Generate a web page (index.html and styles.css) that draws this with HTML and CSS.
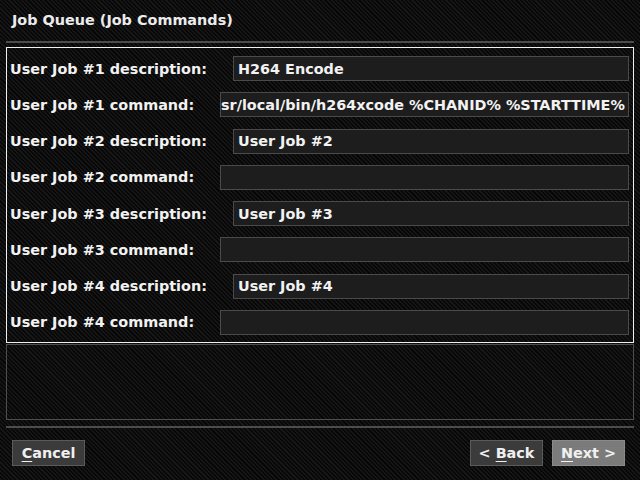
FILE: index.html
```html
<!DOCTYPE html>
<html>
<head>
<meta charset="utf-8">
<link rel="stylesheet" href="styles.css">
</head>
<body>
<div class="screen">
  <div class="title">Job Queue (Job Commands)</div>
  <div class="sep"></div>
  <div class="form">
    <div class="label">User Job #1 description:</div>
    <div class="field desc"><span>H264 Encode</span></div>
    <div class="label">User Job #1 command:</div>
    <div class="field cmd"><span>sr/local/bin/h264xcode %CHANID% %STARTTIME%</span></div>
    <div class="label">User Job #2 description:</div>
    <div class="field desc"><span>User Job #2</span></div>
    <div class="label">User Job #2 command:</div>
    <div class="field cmd"><span></span></div>
    <div class="label">User Job #3 description:</div>
    <div class="field desc"><span>User Job #3</span></div>
    <div class="label">User Job #3 command:</div>
    <div class="field cmd"><span></span></div>
    <div class="label">User Job #4 description:</div>
    <div class="field desc"><span>User Job #4</span></div>
    <div class="label">User Job #4 command:</div>
    <div class="field cmd"><span></span></div>
  </div>
  <div class="help"></div>
  <div class="sep sep2"></div>
  <div class="buttons">
    <div class="btn"><span><u>C</u>ancel</span></div>
    <div class="spacer"></div>
    <div class="btn"><span>&lt; <u>B</u>ack</span></div>
    <div class="btn active"><span><u>N</u>ext &gt;</span></div>
  </div>
</div>
</body>
</html>
```

FILE: styles.css
```css
html, body {
  margin: 0;
  padding: 0;
  width: 640px;
  height: 480px;
  overflow: hidden;
  background: #0c0c0c;
}
.screen {
  width: 640px;
  height: 480px;
  box-sizing: border-box;
  padding: 0 6px;
  display: flex;
  flex-direction: column;
  font-family: "DejaVu Sans", sans-serif;
  font-weight: bold;
  font-size: 14.4px;
  color: #f2f2f2;
  background: repeating-linear-gradient(45deg, #161616 0px, #161616 1.5px, #070707 1.5px, #070707 3px);
}
.title {
  height: 41px;
  line-height: 40px;
  padding-left: 6px;
  color: #ececec;
}
.sep {
  height: 2px;
  background: #4c4c4c;
  flex: none;
}
.form {
  margin-top: 4px;
  height: 296px;
  box-sizing: border-box;
  border: 1px solid #f0f0f0;
  padding: 8px 4px 0 3px;
  display: grid;
  grid-template-columns: 210px 1fr;
  grid-auto-rows: 25px;
  row-gap: 11.25px;
  flex: none;
}
.label {
  display: flex;
  align-items: center;
  white-space: nowrap;
}
.field {
  box-sizing: border-box;
  height: 25px;
  border: 1px solid #4a4a4a;
  background: #1d1d1d;
  display: flex;
  align-items: center;
  overflow: hidden;
  white-space: nowrap;
}
.desc {
  margin-left: 13px;
  padding-left: 4px;
}
.cmd {
  padding-left: 0;
}
.help {
  margin-top: 1px;
  height: 76px;
  box-sizing: border-box;
  border: 1px solid #4e4e4e;
  flex: none;
}
.sep2 {
  margin-top: 6px;
}
.buttons {
  margin-top: 12px;
  display: flex;
  padding: 0 9px 0 6px;
  gap: 9px;
}
.spacer {
  flex: 1;
}
.btn {
  width: 73px;
  height: 26px;
  box-sizing: border-box;
  border: 1px solid #5a5a5a;
  background: #3b3b3b;
  display: flex;
  align-items: center;
  justify-content: center;
  color: #f0f0f0;
  white-space: pre;
}
.btn.active {
  background: #7b7b7b;
  border-color: #8a8a8a;
}
.btn u {
  text-decoration-thickness: 1px;
  text-underline-offset: 3px;
}
```
